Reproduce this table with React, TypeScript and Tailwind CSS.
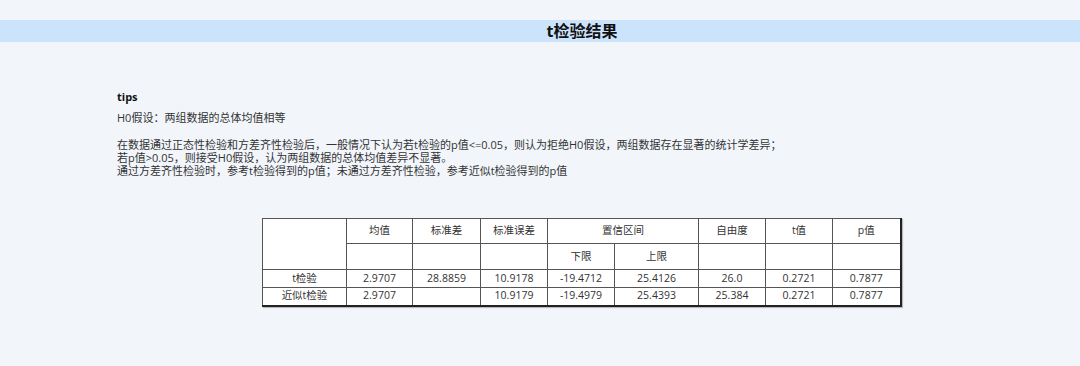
const font = { fontFamily: '"Open Sans", "Noto Sans CJK SC", sans-serif' }

const rows = [
  { name: "t检验", mean: "2.9707", sd: "28.8859", se: "10.9178", lo: "-19.4712", hi: "25.4126", df: "26.0", t: "0.2721", p: "0.7877" },
  { name: "近似t检验", mean: "2.9707", sd: "", se: "10.9179", lo: "-19.4979", hi: "25.4393", df: "25.384", t: "0.2721", p: "0.7877" },
]

const widths = [84, 66, 68, 67, 67, 84, 67, 67, 68]

export default function App() {
  const cell = "border border-[#555] text-center align-middle p-0"
  return (
    <div className="min-h-[366px] bg-[#f2f6fb] pt-5 text-[#333]" style={font}>
      <div className="h-[22px] bg-[#cce4fb] flex items-center justify-center pl-[84px]">
        <h1 className="text-[16px] font-bold text-[#111] leading-none">t检验结果</h1>
      </div>

      <div className="pl-[117px] mt-[48px] text-[11px] leading-[13px]">
        <div className="font-bold text-[#111]">tips</div>
        <div className="mt-2">H0假设：两组数据的总体均值相等</div>
        <div className="mt-[14px]">
          <div>在数据通过正态性检验和方差齐性检验后，一般情况下认为若t检验的p值&lt;=0.05，则认为拒绝H0假设，两组数据存在显著的统计学差异；</div>
          <div>若p值&gt;0.05，则接受H0假设，认为两组数据的总体均值差异不显著。</div>
          <div>通过方差齐性检验时，参考t检验得到的p值；未通过方差齐性检验，参考近似t检验得到的p值</div>
        </div>
      </div>

      <div className="pl-[262px] mt-[41px]">
        <table className="table-fixed border-collapse bg-white text-[10.5px] text-[#333] w-[638px] border-r-2 border-b-2 border-[#222] shadow-[1px_1px_1px_#bbb]">
          <colgroup>
            {widths.map((w, i) => (
              <col key={i} style={{ width: w }} />
            ))}
          </colgroup>
          <thead>
            <tr className="h-[25px]">
              <th rowSpan={2} className={`${cell} font-normal border-[#333]`}></th>
              <th className={`${cell} font-normal`}>均值</th>
              <th className={`${cell} font-normal`}>标准差</th>
              <th className={`${cell} font-normal`}>标准误差</th>
              <th colSpan={2} className={`${cell} font-normal`}>置信区间</th>
              <th className={`${cell} font-normal`}>自由度</th>
              <th className={`${cell} font-normal`}>t值</th>
              <th className={`${cell} font-normal`}>p值</th>
            </tr>
            <tr className="h-[26px]">
              <th className={`${cell} font-normal`}></th>
              <th className={`${cell} font-normal`}></th>
              <th className={`${cell} font-normal`}></th>
              <th className={`${cell} font-normal`}>下限</th>
              <th className={`${cell} font-normal`}>上限</th>
              <th className={`${cell} font-normal`}></th>
              <th className={`${cell} font-normal`}></th>
              <th className={`${cell} font-normal`}></th>
            </tr>
          </thead>
          <tbody>
            {rows.map((r) => (
              <tr key={r.name} className="h-[18px]">
                <td className={cell}>{r.name}</td>
                <td className={cell}>{r.mean}</td>
                <td className={cell}>{r.sd}</td>
                <td className={cell}>{r.se}</td>
                <td className={cell}>{r.lo}</td>
                <td className={cell}>{r.hi}</td>
                <td className={cell}>{r.df}</td>
                <td className={cell}>{r.t}</td>
                <td className={cell}>{r.p}</td>
              </tr>
            ))}
          </tbody>
        </table>
      </div>
    </div>
  )
}
